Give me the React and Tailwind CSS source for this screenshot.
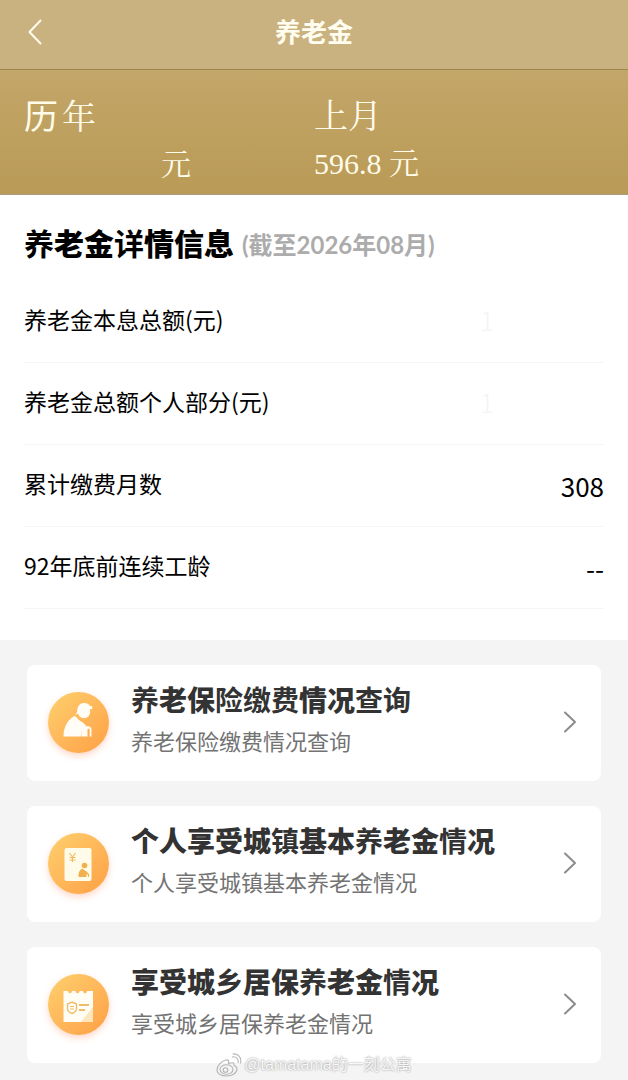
// Pension overview page: balance banner, detail rows and links to the sub queries.
const details = [
  { label: '养老金本息总额(元)', value: '1', masked: true },
  { label: '养老金总额个人部分(元)', value: '1', masked: true },
  { label: '累计缴费月数', value: '308' },
  { label: '92年底前连续工龄', value: '--' },
];

// Title parts wrapped in * are set in the lighter weight.
const services = [
  { icon: 'elder', title: '*养*老保*险缴费*情况*查询*', text: '养老保险缴费情况查询' },
  { icon: 'card', title: '个人享受城*镇*基本*养*老金*情*况', text: '个人享受城镇基本养老金情况' },
  { icon: 'note', title: '享受城*乡*居保*养*老金*情*况', text: '享受城乡居保养老金情况' },
];

const Weighted = ({ children }) =>
  children.split('*').map((part, i) => (
    <span key={i} className={i % 2 ? 'font-semibold' : 'font-black'}>{part}</span>
  ));

const Chevron = ({ left, className }) => (
  <svg viewBox="0 0 14 26" className={className} fill="none" stroke="currentColor" strokeWidth="2" strokeLinecap="round" strokeLinejoin="round" aria-hidden="true">
    <path d={left ? 'M12.5 1.5 1.5 13l11 11.5' : 'M2 3.5 12 13 2 22.5'} />
  </svg>
);

const glyphs = {
  elder: (
    <g fill="#fffdf6">
      <circle cx="36" cy="20" r="6.200" />
      <path d="M27.500 22.500c1.500-1 1.500-3 1.800-5 .5-4 3.200-6.500 6.700-6.500 3 0 5 1 6 3l2.500.5-.5 2.500-8 .5c-3 0-4.500 4.500-8.500 5z" />
      <path d="M15.500 44.500c0-9 4-17 11-20.500 1 0 1.500 1 2.500 2 2.500 3 5.500 4 8 6.500l1.500 2c2.500-1 5 .5 5 3v7h-1.800V38c0-1.200-1.200-1.500-2.200-1v7.500H34V38l-.500 6.500z" />
    </g>
  ),
  card: (
    <g>
      <rect x="16.500" y="15" width="27" height="33" rx="2" fill="#fffbe9" />
      <path d="m21.500 20 3 4 3-4M24.500 24v5M21.500 24.500h6M21.500 27h6" fill="none" stroke="#f2bd62" strokeWidth="1.200" />
      <g fill="#f2b04f">
        <circle cx="36.500" cy="32.500" r="2.800" />
        <path d="M30.500 44c-.5-4 1-7 3.500-8.500l4.500 3 2.500 2.500V44h-1v-2.500h-1.500V44z" />
      </g>
    </g>
  ),
  note: (
    <g>
      <path d="M15.500 17H20c0 3 4 3 4 0h3.500c0 3 4 3 4 0H35c0 3 4 3 4 0h6v31H15.500z" fill="#fffdf4" />
      <path d="M45 33v15H33z" fill="#fde5bd" />
      <g fill="none" stroke="#eebd6c">
        <path d="m24 28 4.500 2v5c0 2-2 3.500-4.500 4.500-2.500-1-4.500-2.500-4.500-4.500v-5z" strokeWidth="1.400" />
        <path d="M22 32.500h4M22 35h4" strokeWidth="1.200" />
        <path d="M31 31h10M31 36h6" strokeWidth="2" />
      </g>
    </g>
  ),
};

const ServiceIcon = ({ name }) => (
  <svg viewBox="0 0 61 61" className="size-[61px] shrink-0 rounded-full bg-linear-to-br from-[#fdd06e] to-[#fe9f45] shadow-[0_3px_7px_#ff8a5a55]" aria-hidden="true">
    {glyphs[name]}
  </svg>
);

const Header = () => (
  <header className="grid h-[70px] grid-cols-[1fr_auto_1fr] items-center border-b border-[#9f844b] bg-[#c9b27f] px-7 pb-1.5 text-[#fffdf0]">
    <button type="button" aria-label="返回" className="justify-self-start">
      <Chevron left className="h-[26px] w-[14px]" />
    </button>
    <h1 className="text-[26px] leading-8 font-bold">养老金</h1>
  </header>
);

const Banner = () => (
  <section className="grid h-[125px] grid-cols-[290px_1fr] content-start border-b border-[#a89b80] bg-linear-to-b from-[#c3a669] to-[#b99a56] px-6 pt-[25px] font-['Liberation_Serif','Noto_Serif_CJK_SC','Noto_Sans_CJK_SC',serif] text-[#fffbe9]">
    <div>
      <p className="text-[34px] leading-[44px]">
        <span className="mr-1 font-['Liberation_Sans','Noto_Sans_CJK_SC',sans-serif]">历</span>
        <span>年</span>
      </p>
      <p className="pl-[137px] text-[30px] leading-[50px]">元</p>
    </div>
    <div>
      <p className="text-[34px] leading-[44px]">上月</p>
      <p className="text-[30px] leading-[50px]">596.8 元</p>
    </div>
  </section>
);

const Details = () => (
  <section className="bg-white px-6 pt-7 pb-[31px]">
    <h2 className="flex items-center gap-2 text-[30px] leading-10 text-black">
      <span><Weighted>*养*老金*详*情信息</Weighted></span>
      <span className="pt-1 text-[24px] leading-9 font-bold text-[#acacac]">(截至2026年08月)</span>
    </h2>
    <dl className="mt-[18px] font-['Noto_Sans_CJK_SC',sans-serif]">
      {details.map((row) => (
        <div key={row.label} className="flex h-[82px] items-center justify-between border-b border-[#f5f5f5] text-black">
          <dt className="pb-1.5 text-[23px] leading-8">{row.label}</dt>
          <dd className={row.masked ? 'pr-[110px] pb-1 text-[26px] leading-8 font-light text-[#f4f4f4]' : 'text-[26px] leading-8'}>
            {row.value}
          </dd>
        </div>
      ))}
    </dl>
  </section>
);

const ServiceCard = ({ icon, title, text }) => (
  <a href="#" className="flex h-[116px] items-center rounded-lg bg-white pr-6 pb-0.5 pl-[21px]">
    <ServiceIcon name={icon} />
    <div className="ml-[22px] flex-1 pb-0.5">
      <h3 className="text-[28px] leading-[42px] text-[#333333]"><Weighted>{title}</Weighted></h3>
      <p className="text-[22px] leading-[42px] text-[#737373]">{text}</p>
    </div>
    <Chevron className="h-[26px] w-[14px] text-[#8c8c8c]" />
  </a>
);

const Watermark = () => (
  <div className="absolute inset-x-0 bottom-[3px] flex items-center justify-center gap-0.5 text-[#f7f7f7]">
    <svg viewBox="0 0 26 24" className="h-6 w-[26px]" fill="none" stroke="#b5b5b5" strokeWidth="1.100" aria-hidden="true">
      <path d="M10 7C5 8 1 13 1 17c0 4 4.500 6 9.500 6 6 0 10.500-3 10.500-7 0-2-1.500-3-3-3.500.5-2 0-4-5.500-2C13 8 12.500 6.500 10 7z" />
      <ellipse cx="10.500" cy="16.500" rx="6.500" ry="4.700" />
      <circle cx="9.500" cy="17" r="2.300" />
      <path d="M16 4c4-1 7 2 6 6M16.500 1c6-1 9.500 4 8 9.500" />
    </svg>
    <span className="font-['Liberation_Sans','Noto_Sans_CJK_SC',sans-serif] text-[16px] leading-6 [text-shadow:0_0_2px_#888888]">@tamatama的一刻公寓</span>
  </div>
);

export default function App() {
  return (
    <div className="relative min-h-screen bg-[#f4f4f4] font-['Lato','Noto_Sans_CJK_SC',sans-serif]">
      <Header />
      <Banner />
      <Details />
      <nav className="flex flex-col gap-[25px] px-[27px] pt-[25px] pb-[17px]">
        {services.map((s) => <ServiceCard key={s.icon} {...s} />)}
      </nav>
      <Watermark />
    </div>
  );
}
